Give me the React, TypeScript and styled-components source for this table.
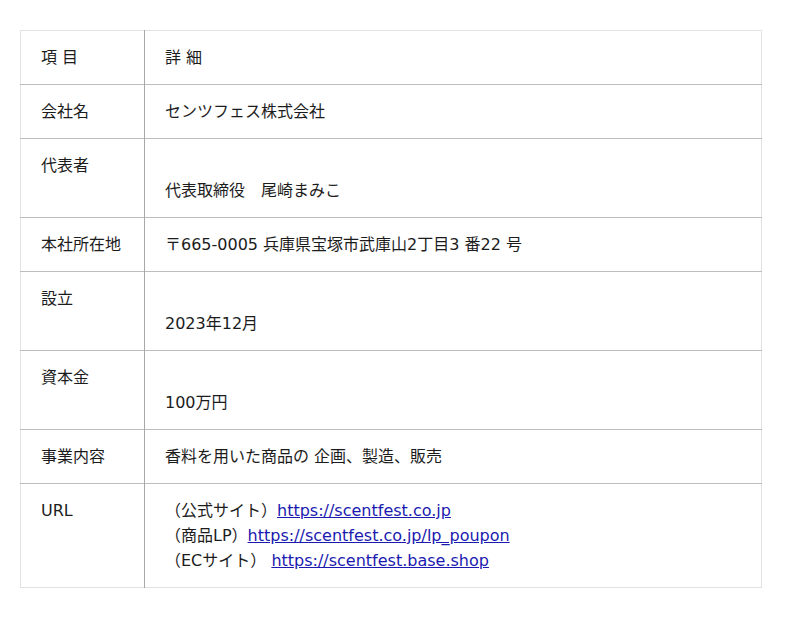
import React from "react";
import styled, { createGlobalStyle } from "styled-components";

const GlobalStyle = createGlobalStyle`
  html, body {
    margin: 0;
    padding: 0;
    background: #fff;
  }
  body {
    font-family: "DejaVu Sans", "Noto Sans CJK JP", sans-serif;
    color: #1c1c1c;
    font-size: 16px;
  }
`;

const Page = styled.div`
  padding: 30px 0 0 20px;
`;

const Table = styled.table`
  width: 742px;
  border-collapse: collapse;
  border: 1px solid #e2e2e2;
  line-height: 25px;
`;

const Row = styled.tr`
  & + & {
    border-top: 1px solid #bdbdbd;
  }
`;

const Label = styled.th`
  width: 83px;
  height: 25px;
  padding: 14px 20px;
  text-align: left;
  vertical-align: top;
  font-weight: normal;
  border-right: 1px solid #a8a8a8;
`;

const Detail = styled.td`
  padding: 14px 20px;
  text-align: left;
  vertical-align: top;
`;

const Link = styled.a`
  color: #1a1ab0;
  text-decoration: underline;
`;

type Item = { label: string; value: React.ReactNode };

const items: Item[] = [
  { label: "項 目", value: "詳 細" },
  { label: "会社名", value: "センツフェス株式会社" },
  {
    label: "代表者",
    value: (
      <>
        <br />
        代表取締役　尾崎まみこ
      </>
    ),
  },
  { label: "本社所在地", value: "〒665-0005 兵庫県宝塚市武庫山2丁目3 番22 号" },
  {
    label: "設立",
    value: (
      <>
        <br />
        2023年12月
      </>
    ),
  },
  {
    label: "資本金",
    value: (
      <>
        <br />
        100万円
      </>
    ),
  },
  { label: "事業内容", value: "香料を用いた商品の 企画、製造、販売" },
  {
    label: "URL",
    value: (
      <>
        （公式サイト）<Link href="#">https://scentfest.co.jp</Link>
        <br />
        （商品LP）<Link href="#">https://scentfest.co.jp/lp_poupon</Link>
        <br />
        （ECサイト） <Link href="#">https://scentfest.base.shop</Link>
      </>
    ),
  },
];

const App = () => (
  <Page>
    <GlobalStyle />
    <Table>
      <tbody>
        {items.map((item) => (
          <Row key={item.label}>
            <Label>{item.label}</Label>
            <Detail>{item.value}</Detail>
          </Row>
        ))}
      </tbody>
    </Table>
  </Page>
);

export default App;
